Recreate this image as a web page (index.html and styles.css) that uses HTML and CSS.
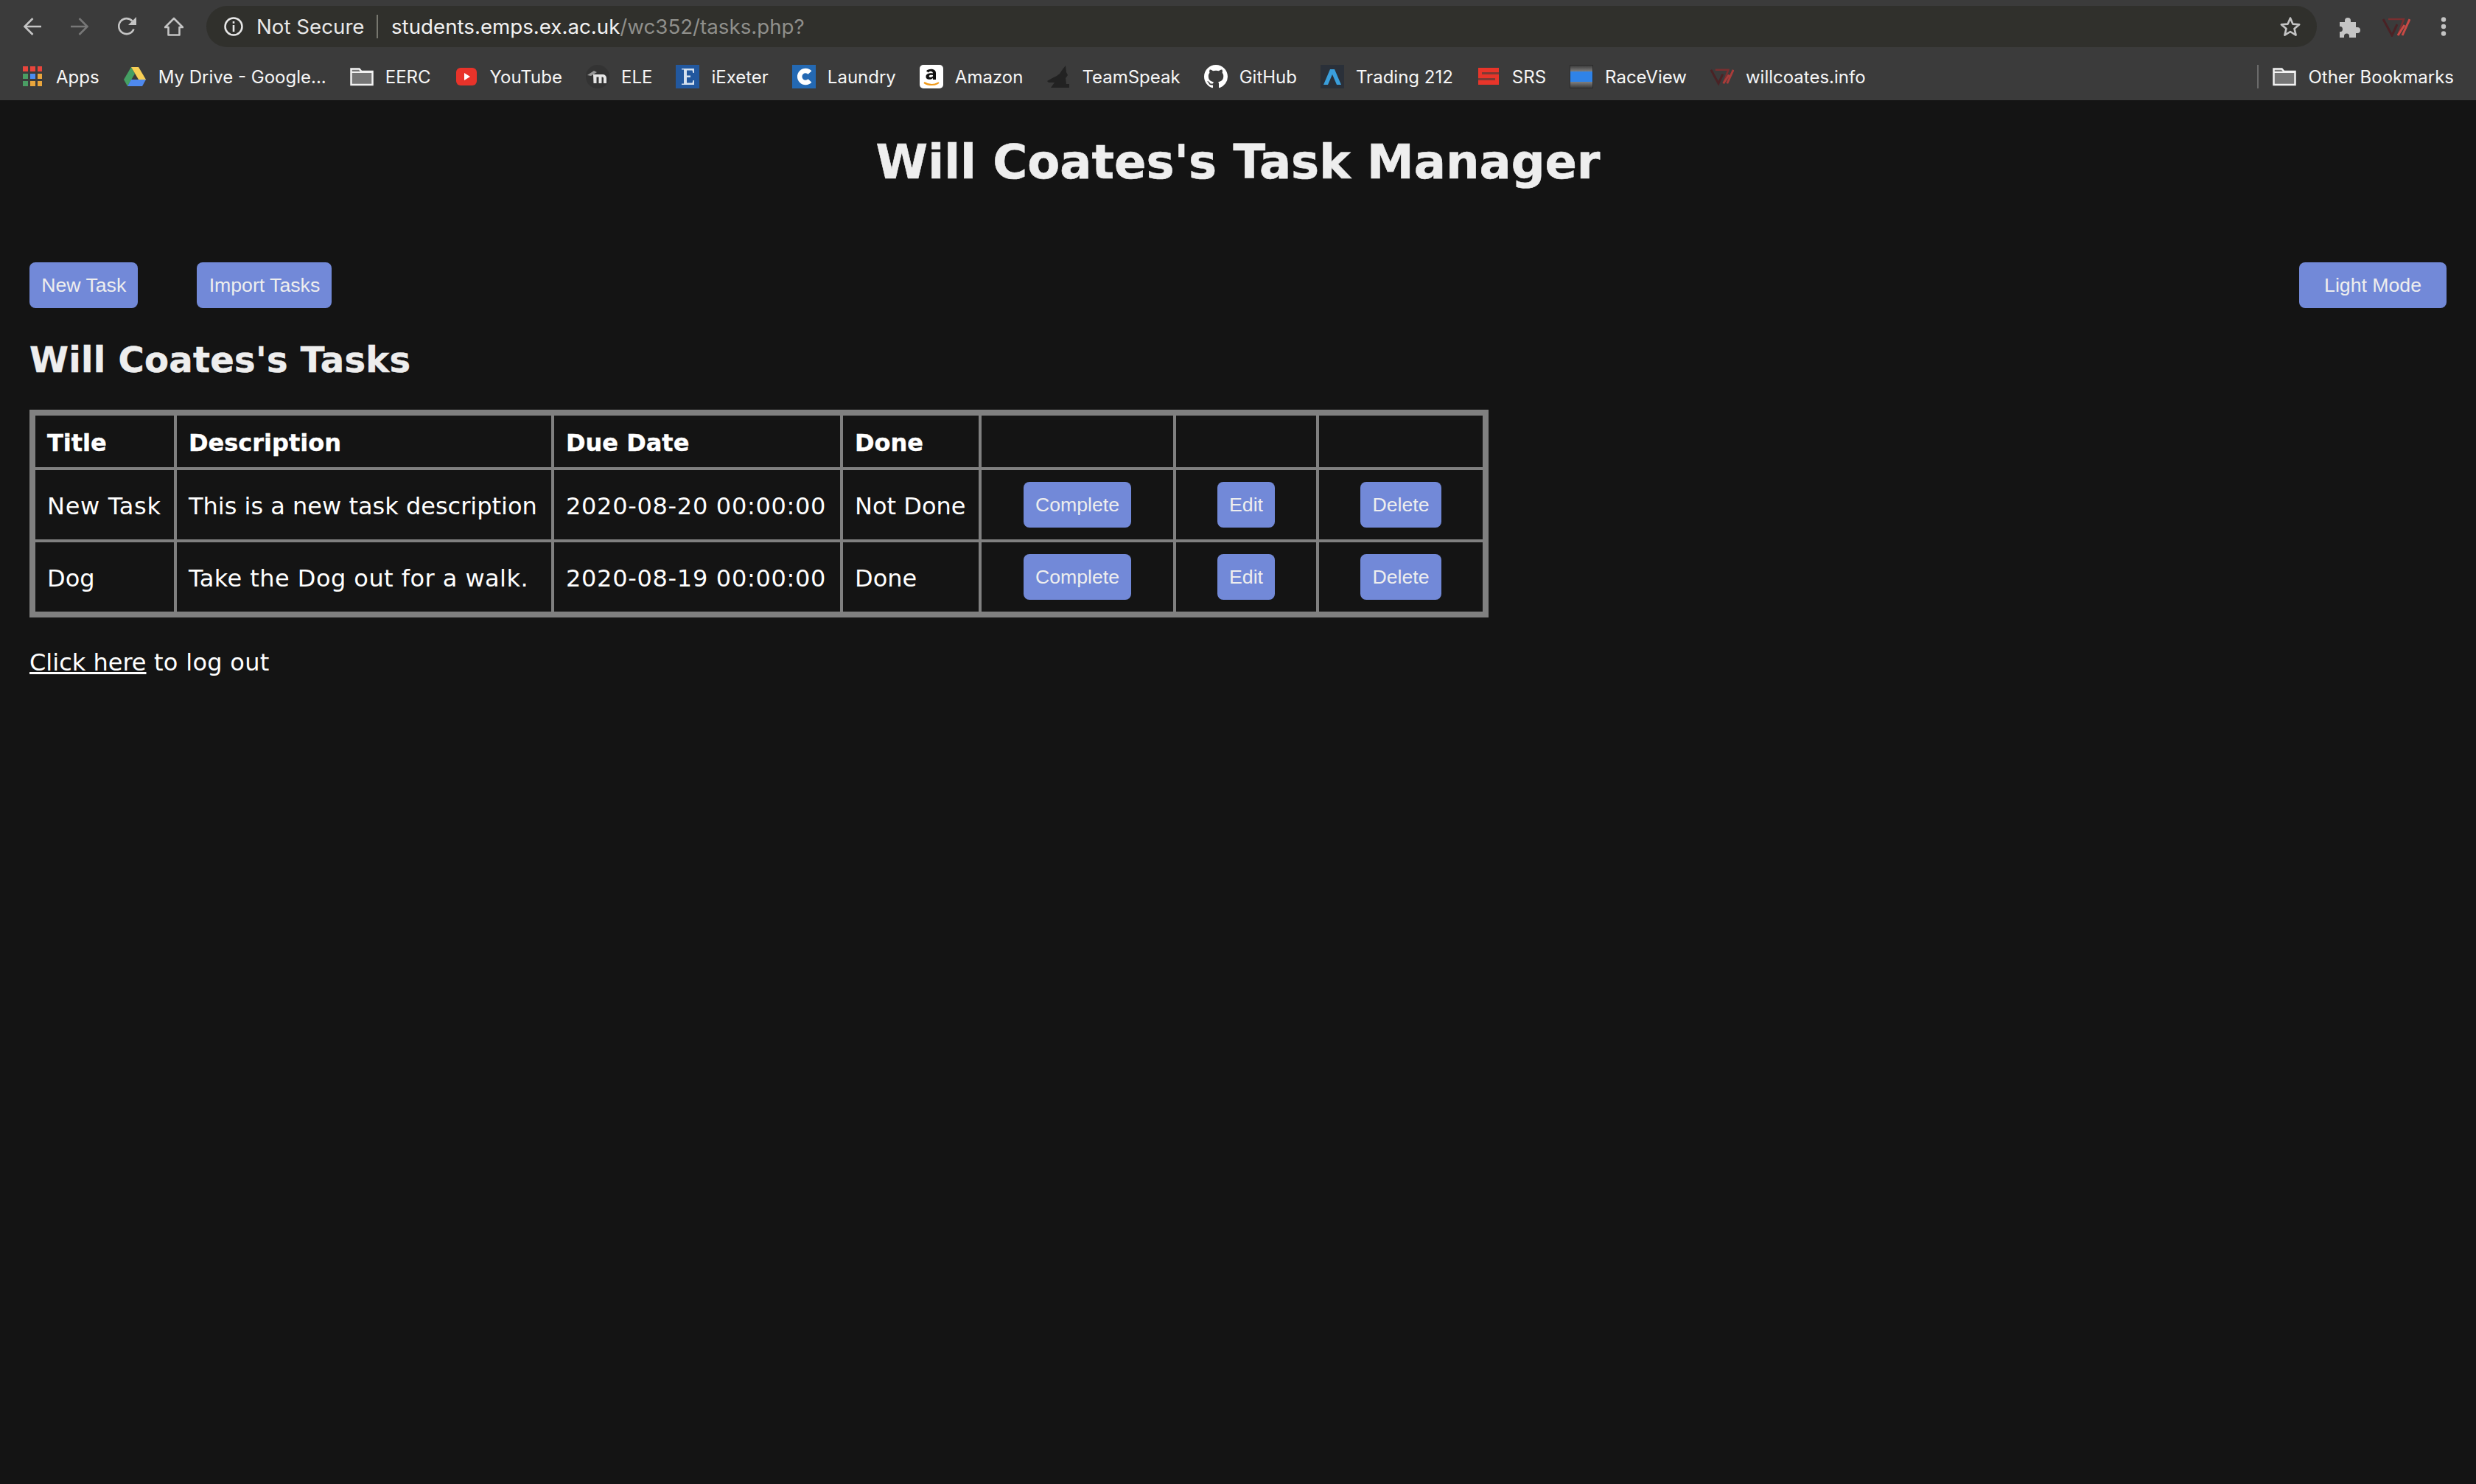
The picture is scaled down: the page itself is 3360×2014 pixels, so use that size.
FILE: index.html
```html
<!DOCTYPE html>
<html lang="en">
<head>
    <meta charset="UTF-8">
    <meta name="viewport" content="width=device-width, initial-scale=1.0">
    <title>Will Coates's Task Manager</title>
    <link rel="stylesheet" href="styles.css">
</head>
<body>
    <header class="browser">
        <div class="toolbar">
            <div class="nav-icons">
                <svg class="nav-icon" viewBox="0 0 26 26"><path d="M25 13H3M13.500 2 2.500 13 13.500 24" fill="none" stroke="#c4c4c4" stroke-width="2.600"/></svg>
                <svg class="nav-icon" viewBox="0 0 26 26"><path d="M1 13H23M12.500 2 23.500 13 12.500 24" fill="none" stroke="#777" stroke-width="2.600"/></svg>
                <svg class="nav-icon" viewBox="0 0 26 26"><path d="M22.500 16.500A10.500 10.500 0 1 1 20.500 5.500" fill="none" stroke="#c4c4c4" stroke-width="2.600"/><path d="M26 0V11H15Z" fill="#c4c4c4"/></svg>
                <svg class="nav-icon" viewBox="0 0 26 26"><path d="M13 2 1 14H5.500V24.500H20.500V14H25Z" fill="none" stroke="#c4c4c4" stroke-width="2.600" stroke-linejoin="round"/></svg>
            </div>
            <div class="omnibox">
                <svg class="info-icon" viewBox="0 0 26 26"><circle cx="13" cy="13" r="11.500" fill="none" stroke="#e8e8e8" stroke-width="2.500"/><path d="M11.700 6h2.600v2.800h-2.600zM11.700 11h2.600v9h-2.600z" fill="#e8e8e8"/></svg>
                <span class="secure-text">Not Secure</span>
                <span class="omni-divider"></span>
                <span class="url-host">students.emps.ex.ac.uk</span><span class="url-path">/wc352/tasks.php?</span>
                <svg class="star-icon" viewBox="0 0 30 30"><path d="M15 3.500 18.400 11.600 27.200 12.300 20.500 18 22.600 26.600 15 22 7.400 26.600 9.500 18 2.800 12.300 11.600 11.600Z" fill="none" stroke="#c4c4c4" stroke-width="2.600" stroke-linejoin="round"/></svg>
            </div>
            <div class="ext-icons">
                <svg class="puzzle-icon" viewBox="0 0 30 30"><path d="M1 8h7V6a4 4 0 0 1 8 0v2h7v7h2a4 4 0 0 1 0 8h-2v6H14v-2a3.500 3.500 0 0 0-7 0v2H1v-8h2a4 4 0 0 0 0-7H1Z" fill="#c4c4c4"/></svg>
                <svg class="vw-icon" viewBox="0 0 38 26">
                    <path d="M1 2 13 24 20 9" fill="none" stroke="#4a2225" stroke-width="3"/>
                    <path d="M8 2H29L21 24" fill="none" stroke="#7a2f30" stroke-width="2.500"/>
                    <path d="M21 24 30 10M27 24 37 2" fill="none" stroke="#c94a45" stroke-width="3"/>
                </svg>
                <svg class="menu-icon" viewBox="0 0 8 26"><circle cx="4" cy="3.500" r="3.200" fill="#c4c4c4"/><circle cx="4" cy="13" r="3.200" fill="#c4c4c4"/><circle cx="4" cy="22.500" r="3.200" fill="#c4c4c4"/></svg>
            </div>
        </div>
        <nav class="bookmarks">
            <a class="bookmark">
                <svg class="bm-icon" viewBox="0 0 32 32"><path d="M3 2h7v7H3z" fill="#e8453c"/><path d="M13 2h7v7h-7z" fill="#e8453c"/><path d="M23 2h6v7h-6z" fill="#e8453c"/><path d="M3 12h7v7H3z" fill="#4a9d63"/><path d="M13 12h7v7h-7z" fill="#4a8cf0"/><path d="M23 12h6v7h-6z" fill="#e9a53c"/><path d="M3 22h7v7H3z" fill="#4a9d63"/><path d="M13 22h7v7h-7z" fill="#e9a53c"/><path d="M23 22h6v7h-6z" fill="#e9a53c"/></svg>
                <span>Apps</span>
            </a>
            <a class="bookmark">
                <svg class="bm-icon" viewBox="0 0 32 32"><path d="M11 3 1 20 6 29 16 12Z" fill="#459f63"/><path d="M11 3H21L31 20H21Z" fill="#f8cf55"/><path d="M11 20H31L26 29H6Z" fill="#4f89ee"/></svg>
                <span>My Drive - Google...</span>
            </a>
            <a class="bookmark">
                <svg class="bm-icon" viewBox="0 0 32 32"><path d="M1.500 5.500h11l3 3.500h15v18h-29Z" fill="#767676" stroke="#f2f2f2" stroke-width="2.500"/><path d="M1.500 10h29" stroke="#f2f2f2" stroke-width="2"/></svg>
                <span>EERC</span>
            </a>
            <a class="bookmark">
                <svg class="bm-icon" viewBox="0 0 32 32"><rect x="2" y="4" width="28" height="24" rx="6" fill="#e8332a"/><path d="M13 11 21 16 13 21Z" fill="#fff"/></svg>
                <span>YouTube</span>
            </a>
            <a class="bookmark">
                <svg class="bm-icon" viewBox="0 0 32 32"><circle cx="16" cy="16" r="16" fill="#333"/><path d="M10 13h13a5 5 0 0 1 5 5v7h-4v-7a1.500 1.500 0 0 0-1.500-1.500h-1V25h-4v-8.500h-3V25h-4z" fill="#e6e6e6"/><path d="M2 14 11 8l4 2-8 5z" fill="#999"/></svg>
                <span>ELE</span>
            </a>
            <a class="bookmark">
                <svg class="bm-icon" viewBox="0 0 32 32"><rect width="32" height="32" fill="#22589f"/><path d="M8 5h17v6h-1.500l-1-3.500H15v7h5V17h-5v7.500h7.500l1-3.500H25v6H8v-1.500h3v-19H8Z" fill="#d5e1ef"/></svg>
                <span>iExeter</span>
            </a>
            <a class="bookmark">
                <svg class="bm-icon" viewBox="0 0 32 32"><rect width="32" height="32" fill="#2469b3"/><path d="M24 10.500A8 8 0 1 0 24 21.500" fill="none" stroke="#fff" stroke-width="6.500"/></svg>
                <span>Laundry</span>
            </a>
            <a class="bookmark">
                <svg class="bm-icon" viewBox="0 0 32 32"><rect width="32" height="32" rx="5" fill="#fff"/><path d="M9 8.500C11 5 22 4 22 11V20H18V18C15 21 8 20.500 8.500 15.500 9 11.500 14 11 18 11.500 18 8 13 8 12 10.500ZM18 14C15 13.500 12.500 14 12.700 15.800 13 17.500 16.500 17.200 18 15.500Z" fill="#111"/><path d="M6 24C12 28 21 28 26 24" fill="none" stroke="#f09a1a" stroke-width="2.200"/></svg>
                <span>Amazon</span>
            </a>
            <a class="bookmark">
                <svg class="bm-icon" viewBox="0 0 32 32"><path d="M1 22 8 18 14 15 18 12 22 6 26 1 27 10 29 14 26 18 27 26H31V31H6L11 24H3Z" fill="#222"/></svg>
                <span>TeamSpeak</span>
            </a>
            <a class="bookmark">
                <svg class="bm-icon" viewBox="0 0 16 16"><path fill="#fff" d="M8 0C3.580 0 0 3.580 0 8c0 3.540 2.290 6.530 5.470 7.590.4.070.55-.17.55-.38 0-.19-.010-.82-.010-1.490-2.010.37-2.530-.49-2.690-.94-.09-.23-.48-.94-.82-1.130-.28-.15-.68-.52-.010-.53.630-.010 1.080.58 1.230.82.720 1.210 1.870.87 2.330.66.070-.52.280-.87.510-1.070-1.780-.2-3.640-.89-3.640-3.950 0-.87.310-1.590.820-2.150-.080-.2-.360-1.020.080-2.120 0 0 .67-.21 2.200.82.640-.18 1.320-.27 2-.27s1.360.09 2 .27c1.530-1.040 2.200-.82 2.200-.82.440 1.100.160 1.920.080 2.120.51.560.820 1.270.820 2.150 0 3.070-1.870 3.750-3.650 3.950.290.250.540.730.540 1.480 0 1.070-.010 1.930-.010 2.200 0 .210.150.460.550.380A8.010 8.010 0 0 0 16 8c0-4.420-3.580-8-8-8z"/></svg>
                <span>GitHub</span>
            </a>
            <a class="bookmark">
                <svg class="bm-icon" viewBox="0 0 32 32"><rect width="32" height="32" fill="#2a3039"/><path d="M13 6h6l9 21h-6l-6-14-6 14H4Z" fill="#3a9fdc"/></svg>
                <span>Trading 212</span>
            </a>
            <a class="bookmark">
                <svg class="bm-icon" viewBox="0 0 32 32"><rect x="2" y="4" width="28" height="23" fill="#e8352a"/><path d="M7 10h23v3H7ZM2 18h23v3H2Z" fill="#7d3a34"/></svg>
                <span>SRS</span>
            </a>
            <a class="bookmark">
                <svg class="bm-icon" viewBox="0 0 32 32">
                    <defs>
                        <linearGradient id="raceTop" x1="0" y1="0" x2="0" y2="1"><stop offset="0" stop-color="#3c3c3c"/><stop offset="1" stop-color="#808080"/></linearGradient>
                        <linearGradient id="raceBottom" x1="0" y1="0" x2="0" y2="1"><stop offset="0" stop-color="#808080"/><stop offset="1" stop-color="#3c3c3c"/></linearGradient>
                    </defs>
                    <rect x=".5" y=".5" width="31" height="31" fill="#333" stroke="#2c2c2c"/>
                    <rect x="1" y="1" width="30" height="8" fill="url(#raceTop)"/>
                    <rect x="1" y="9" width="30" height="14" fill="#2f83e8"/>
                    <rect x="1" y="23" width="30" height="8" fill="url(#raceBottom)"/>
                </svg>
                <span>RaceView</span>
            </a>
            <a class="bookmark">
                <svg class="bm-icon" viewBox="0 0 38 26">
                    <path d="M1 2 13 24 20 9" fill="none" stroke="#4a2225" stroke-width="3.500"/>
                    <path d="M8 2H29L21 24" fill="none" stroke="#7a2f30" stroke-width="3"/>
                    <path d="M21 24 30 10M27 24 37 2" fill="none" stroke="#a83c3a" stroke-width="3.500"/>
                </svg>
                <span>willcoates.info</span>
            </a>
            <a class="bookmark other">
                <svg class="bm-icon" viewBox="0 0 32 32"><path d="M1.500 5.500h11l3 3.500h15v18h-29Z" fill="#767676" stroke="#f2f2f2" stroke-width="2.500"/><path d="M1.500 10h29" stroke="#f2f2f2" stroke-width="2"/></svg>
                <span>Other Bookmarks</span>
            </a>
        </nav>
    </header>

    <main class="page">
        <h1>Will Coates's Task Manager</h1>
        <div class="actions">
            <div class="actions-left">
                <button class="btn">New Task</button>
                <button class="btn">Import Tasks</button>
            </div>
            <button class="btn btn-mode">Light Mode</button>
        </div>
        <h2>Will Coates's Tasks</h2>
        <table class="tasks">
            <colgroup>
                <col class="col-title">
                <col class="col-desc">
                <col class="col-due">
                <col class="col-done">
                <col class="col-complete">
                <col class="col-edit">
                <col class="col-delete">
            </colgroup>
            <thead>
                <tr>
                    <th>Title</th>
                    <th>Description</th>
                    <th>Due Date</th>
                    <th>Done</th>
                    <th></th>
                    <th></th>
                    <th></th>
                </tr>
            </thead>
            <tbody>
                <tr>
                    <td class="cell-wide">New Task</td>
                    <td>This is a new task description</td>
                    <td class="cell-wide">2020-08-20 00:00:00</td>
                    <td>Not Done</td>
                    <td class="cell-btn"><button class="btn">Complete</button></td>
                    <td class="cell-btn"><button class="btn">Edit</button></td>
                    <td class="cell-btn"><button class="btn">Delete</button></td>
                </tr>
                <tr>
                    <td>Dog</td>
                    <td class="cell-walk">Take the Dog out for a walk.</td>
                    <td class="cell-wide">2020-08-19 00:00:00</td>
                    <td>Done</td>
                    <td class="cell-btn"><button class="btn">Complete</button></td>
                    <td class="cell-btn"><button class="btn">Edit</button></td>
                    <td class="cell-btn"><button class="btn">Delete</button></td>
                </tr>
            </tbody>
        </table>
        <p class="logout"><a href="#">Click here</a> to log out</p>
    </main>
</body>
</html>
```

FILE: styles.css
```css
html, body {
    height: 100%;
}
body {
    margin: 0;
    background-color: #141414;
    color: #fff;
    font-family: "DejaVu Sans", sans-serif;
    overflow: hidden;
}

/* browser chrome */
.browser {
    height: 136px;
    background-color: #3b3b3b;
    font-family: Inter, "Liberation Sans", sans-serif;
}
.toolbar {
    height: 64px;
    display: flex;
    align-items: flex-start;
    padding-left: 31px;
    box-sizing: border-box;
}
.nav-icons {
    display: flex;
    gap: 38px;
    padding-top: 23px;
    width: 249px;
    flex: none;
}
.nav-icon {
    width: 26px;
    height: 26px;
}
.omnibox {
    width: 2864px;
    height: 56px;
    margin-top: 8px;
    background-color: #30302c;
    border-radius: 28px;
    display: flex;
    align-items: center;
    padding-left: 24px;
    box-sizing: border-box;
    font-size: 27.700px;
    flex: none;
}
.info-icon {
    width: 26px;
    height: 26px;
    margin-right: 18px;
}
.secure-text {
    color: #e8e8e8;
    width: 163px;
    white-space: nowrap;
}
.omni-divider {
    width: 2px;
    height: 32px;
    background-color: #77776f;
    margin-right: 18px;
}
.url-host {
    color: #f2f2f2;
}
.url-path {
    color: #8f8f8b;
}
.star-icon {
    width: 30px;
    height: 30px;
    margin-left: auto;
    margin-right: 21px;
}
.ext-icons {
    display: flex;
    align-items: flex-start;
    padding-top: 22px;
    margin-left: 30px;
}
.puzzle-icon {
    width: 30px;
    height: 30px;
}
.vw-icon {
    width: 38px;
    height: 26px;
    margin-left: 29px;
    margin-top: 2px;
}
.menu-icon {
    width: 8px;
    height: 26px;
    margin-left: 41px;
    margin-top: 1px;
}
.bookmarks {
    height: 72px;
    display: flex;
    align-items: flex-start;
    gap: 32px;
    padding: 24px 30px 0 28px;
    box-sizing: border-box;
    font-size: 24px;
    color: #f5f5f5;
}
.bookmark {
    display: flex;
    align-items: center;
    gap: 16px;
    white-space: nowrap;
}
.bm-icon {
    width: 32px;
    height: 32px;
    flex: none;
}
.other {
    margin-left: auto;
    position: relative;
}
.other::before {
    content: "";
    position: absolute;
    left: -21px;
    top: 0;
    width: 2px;
    height: 32px;
    background-color: #6b6b6b;
}

/* page */
.page {
    padding: 0 40px;
}
h1 {
    margin: 0;
    padding-top: 46px;
    font-size: 64px;
    line-height: 76px;
    font-weight: bold;
    text-align: center;
    color: #eee;
    -webkit-text-stroke: .6px #eee;
}
.actions {
    display: flex;
    justify-content: space-between;
    margin-top: 98px;
}
.actions-left {
    display: flex;
    gap: 80px;
}
.btn {
    height: 62px;
    padding: 0 16.200px;
    background-color: #7289d8;
    color: #eee;
    border: none;
    border-radius: 8px;
    font-family: "Liberation Sans", Arial, sans-serif;
    font-size: 26.670px;
    cursor: pointer;
}
.btn-mode {
    padding: 0 34px;
}
h2 {
    margin: 42px 0 0;
    font-size: 48px;
    line-height: 56px;
    font-weight: bold;
    letter-spacing: .3px;
    color: #eee;
    -webkit-text-stroke: .5px #eee;
}
.tasks {
    margin-top: 40px;
    width: 1980px;
    table-layout: fixed;
    border-collapse: separate;
    border-spacing: 0;
    border: 6px solid #808080;
    font-size: 32px;
}
.tasks th, .tasks td {
    border: 2px solid #808080;
    padding: 4px 16px 0;
    text-align: left;
    white-space: nowrap;
}
.tasks th {
    height: 66px;
    -webkit-text-stroke: .4px #fff;
}
.tasks td {
    height: 90px;
}
.tasks .cell-btn {
    height: 94px;
    text-align: center;
    padding: 0;
}
.tasks .cell-wide {
    letter-spacing: .7px;
}
.tasks .cell-walk {
    letter-spacing: .45px;
}
.col-title { width: 192px; }
.col-desc { width: 512px; }
.col-due { width: 392px; }
.col-done { width: 188px; }
.col-complete { width: 264px; }
.col-edit { width: 194px; }
.col-delete { width: 226px; }
.logout {
    margin: 42px 0 0;
    font-size: 32px;
    line-height: 38px;
    letter-spacing: .3px;
}
.logout a {
    color: #fff;
    letter-spacing: 0;
}
```
